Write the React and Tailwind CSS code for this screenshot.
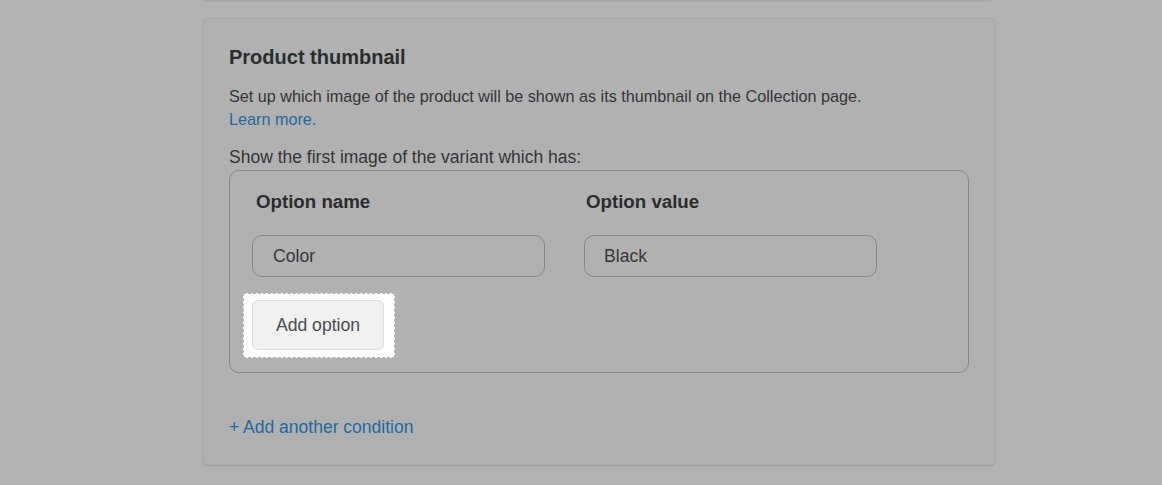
export default function App() {
  return (
    <div className="w-full h-[485px] bg-[#b3b3b3] overflow-hidden font-['Liberation_Sans',Arial,sans-serif]">
      <div className="ml-[204px] w-[788px] h-[1px] mt-[-1px] bg-[#b0b0b0] shadow-[0_1px_2px_rgba(0,0,0,0.18)]" />
      <div className="ml-[203px] mt-[18px] w-[792px] rounded-[4px] border border-[#a9a9a9] bg-[#b1b1b1] shadow-[0_1px_2px_rgba(0,0,0,0.12)] px-[25px] pt-[24px] pb-[25px]">
        <h2 className="text-[20px] leading-[28px] font-bold text-[#2a2c2e]">Product thumbnail</h2>
        <p className="mt-[14px] text-[16.2px] leading-[23px] text-[#333538]">
          Set up which image of the product will be shown as its thumbnail on the Collection page.
          <br />
          <span className="text-[#1a6aa3]">Learn more.</span>
        </p>
        <p className="mt-[14px] text-[17.5px] leading-[24px] text-[#333538]">Show the first image of the variant which has:</p>
        <div className="mt-[1px] rounded-[10px] border border-[#878787] pl-[22px] pt-[18px] pb-[14px]">
          <div className="flex gap-[39px]">
            <div className="w-[293px] flex flex-col">
              <div className="pl-[4px] text-[18.7px] leading-[26px] font-bold text-[#2a2c2e]">Option name</div>
              <div className="mt-[20px] h-[42px] rounded-[10px] border border-[#878787] flex items-center pl-[20px] text-[17.6px] text-[#363839]">Color</div>
            </div>
            <div className="w-[293px] flex flex-col">
              <div className="pl-[2px] text-[18.7px] leading-[26px] font-bold text-[#2a2c2e]">Option value</div>
              <div className="mt-[20px] h-[42px] rounded-[10px] border border-[#878787] flex items-center pl-[19px] text-[17.6px] text-[#363839]">Black</div>
            </div>
          </div>
          <div className="mt-[16px] ml-[-9px] w-fit bg-white border border-dashed border-[#b5b5b5] pl-[8px] pr-[10px] pt-[6px] pb-[7px]">
            <button className="h-[50px] w-[132px] rounded-[6px] border border-[#dcdcdc] bg-[#f1f1f1] text-[17.6px] text-[#4a4b4d] flex items-center justify-center">Add option</button>
          </div>
        </div>
        <div className="mt-[42px] text-[17.5px] leading-[24px] text-[#1a6aa3]">+ Add another condition</div>
      </div>
    </div>
  );
}
